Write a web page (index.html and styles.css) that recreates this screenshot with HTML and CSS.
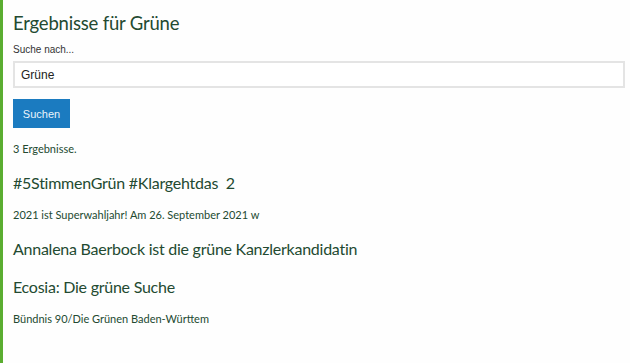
FILE: index.html
```html
<!DOCTYPE html>
<html lang="de">
<head>
<meta charset="utf-8">
<title>Suche</title>
<link rel="stylesheet" href="styles.css">
</head>
<body>
<main class="page">
  <h1 class="title">Ergebnisse für Grüne</h1>
  <form class="search">
    <label class="label" for="q">Suche nach...</label>
    <input class="input" id="q" type="text" value="Grüne">
    <button class="btn" type="button">Suchen</button>
  </form>
  <p class="count">3 Ergebnisse.</p>
  <article class="result">
    <h2 class="result-title">#5StimmenGrün #Klargehtdas&nbsp; 2</h2>
    <p class="excerpt">2021 ist Superwahljahr! Am 26. September 2021 w</p>
  </article>
  <article class="result">
    <h2 class="result-title">Annalena Baerbock ist die grüne Kanzlerkandidatin</h2>
  </article>
  <article class="result">
    <h2 class="result-title">Ecosia: Die grüne Suche</h2>
    <p class="excerpt">Bündnis 90/Die Grünen Baden-Württem</p>
  </article>
</main>
</body>
</html>
```
FILE: styles.css
```css
* { box-sizing: border-box; }
html, body { margin: 0; padding: 0; background: #fefefe; }
body {
  font-family: Lato, "Open Sans", sans-serif;
  color: #234a31;
  min-height: 363px;
  border-left: 3px solid #5aad30;
}
.page { padding: 11px 5px 0 10px; }
.title {
  margin: 0;
  font-weight: 400;
  font-size: 18.5px;
  letter-spacing: -0.2px;
  line-height: 25px;
}
.search { display: flex; flex-direction: column; align-items: flex-start; }
.label {
  margin-top: 7px;
  font-family: "Liberation Sans", Arial, sans-serif;
  font-size: 10px;
  line-height: 13px;
  color: #333;
}
.input {
  margin-top: 5px;
  width: 100%;
  height: 27px;
  border: 2px solid #e4e4e4;
  padding: 0 6px;
  font-family: "Liberation Sans", Arial, sans-serif;
  font-size: 12px;
  color: #222;
  background: #fff;
}
.btn {
  margin-top: 11px;
  width: 57px;
  height: 29px;
  border: 0;
  background: #1b7bc0;
  color: #eaf3fb;
  font-family: "Liberation Sans", Arial, sans-serif;
  font-size: 11px;
  padding: 0;
}
.count { margin: 14px 0 0; font-size: 11px; line-height: 14px; }
.result { margin-top: 16px; }
.result-title {
  margin: 0;
  font-weight: 400;
  font-size: 16px;
  letter-spacing: -0.25px;
  line-height: 22px;
}
.excerpt { margin: 14px 0 0; font-size: 11px; line-height: 14px; }
```
